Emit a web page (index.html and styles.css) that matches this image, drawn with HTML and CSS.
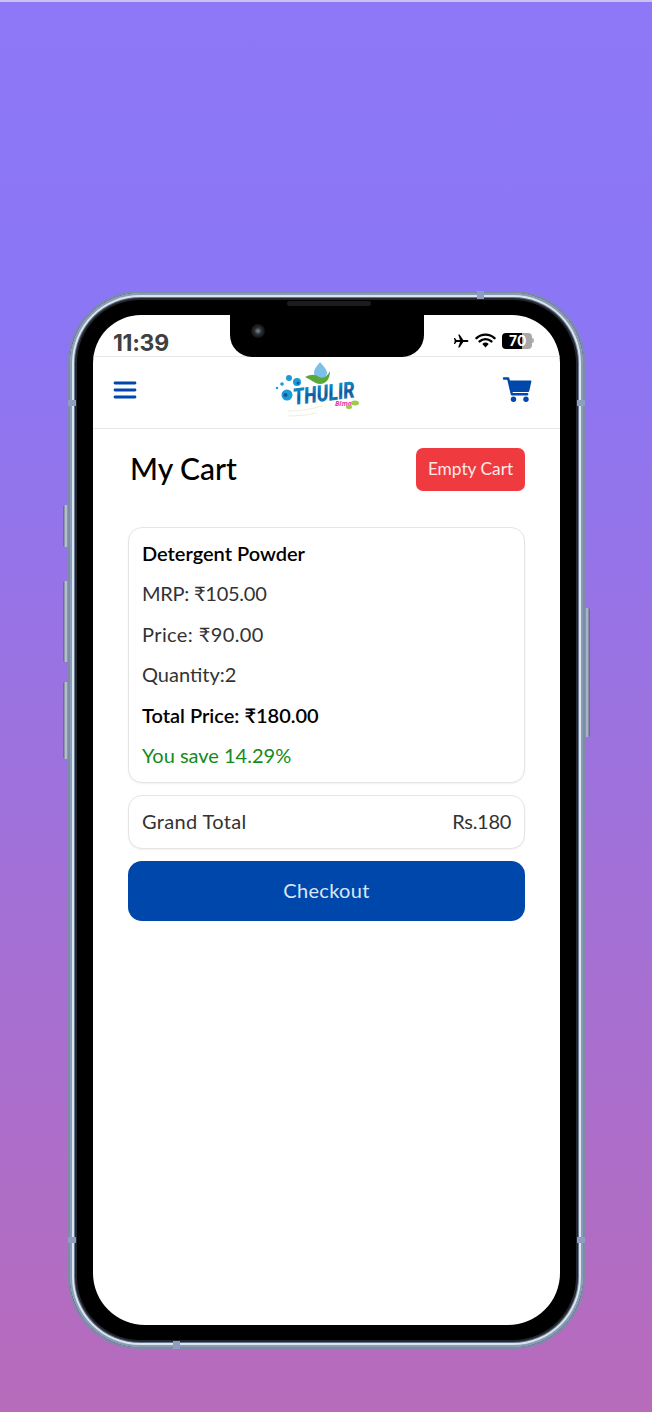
FILE: index.html
```html
<!DOCTYPE html>
<html lang="en">
<head>
    <meta charset="UTF-8">
    <meta name="viewport" content="width=device-width, initial-scale=1.0">
    <title>My Cart - Thulir</title>
    <link rel="stylesheet" href="styles.css">
</head>
<body>
    <div class="phone">
        <span class="side-btn btn-mute"></span>
        <span class="side-btn btn-up"></span>
        <span class="side-btn btn-down"></span>
        <span class="side-btn btn-power"></span>
        <span class="band band-top"></span>
        <span class="band band-right"></span>
        <span class="band band-left"></span>
        <span class="band band-left-low"></span>
        <span class="band band-right-low"></span>
        <span class="band band-bottom"></span>
        <span class="speaker"></span>

        <div class="screen">
            <div class="notch"><span class="camera"></span></div>

            <div class="statusbar">
                <div class="time">11:39</div>
                <div class="status-icons">
                    <svg class="plane" width="16" height="14" viewBox="0 0 16 14">
                        <path d="M15.5 7c0-.7-.8-1.100-1.600-1.100H10.300L6.600.4H5.200l1.800 5.500H3.500L2 4.100H.9l.8 2.900-.8 2.900H2l1.500-1.800H7L5.200 13.600h1.400l3.700-5.500h3.600c.8 0 1.600-.4 1.600-1.100z" fill="#000"/>
                    </svg>
                    <svg class="wifi" width="21" height="15" viewBox="0 0 21 15">
                        <path d="M1.500 5.200a13 13 0 0 1 18 0M4.600 8.400a8.700 8.700 0 0 1 11.800 0" fill="none" stroke="#000" stroke-width="2.400" stroke-linecap="round"/>
                        <path d="M7.300 11a4.700 4.700 0 0 1 6.400 0l-3.200 3.500z" fill="#000"/>
                    </svg>
                    <div class="battery"><span class="battery-level">70</span><span class="battery-cap"></span></div>
                </div>
            </div>

            <div class="topbar">
                <svg class="menu-icon" width="24" height="20" viewBox="0 0 24 20">
                    <path d="M2 3h20M2 10h20M2 17h20" stroke="#0047ab" stroke-width="2.800" stroke-linecap="round"/>
                </svg>
                <svg class="logo" width="90" height="66" viewBox="0 0 90 66">
                    <defs>
                        <linearGradient id="thulirBlue" x1="0" y1="0" x2="0" y2="1">
                            <stop offset="0" stop-color="#17a3dc"/>
                            <stop offset="0.55" stop-color="#0d5a9f"/>
                            <stop offset="1" stop-color="#2a9ad6"/>
                        </linearGradient>
                    </defs>
                    <path d="M46 3c3 4 7 7 7 11a6.500 6 0 0 1-13 0c0-4 3-7 6-11z" fill="#7cc0ea"/>
                    <path d="M31 18c6-3 10-3 14 0 4 2 8 0 11-6 0 8-4 13-10 13-5 0-10-5-15-7z" fill="#5aa83c"/>
                    <circle cx="13" cy="36" r="5.500" fill="#1b9ad6"/>
                    <circle cx="11.500" cy="36" r="2" fill="#0d5a9f"/>
                    <circle cx="15" cy="19" r="3" fill="#1b9ad6"/>
                    <circle cx="23" cy="23" r="4" fill="#1b9ad6"/>
                    <circle cx="24" cy="24" r="1.500" fill="#0d5a9f"/>
                    <circle cx="8" cy="25" r="1.800" fill="#1b9ad6"/>
                    <circle cx="3" cy="29" r="1.200" fill="#1b9ad6"/>
                    <text class="logo-text" x="20" y="46" textLength="62" lengthAdjust="spacingAndGlyphs" fill="url(#thulirBlue)" transform="rotate(-7 20 46)">THULIR</text>
                    <text class="logo-sub" x="61" y="47">Bima</text>
                    <ellipse cx="81" cy="44" rx="4" ry="2.500" fill="#9ccc4a"/>
                    <ellipse cx="75" cy="48" rx="3" ry="2" fill="#9ccc4a"/>
                    <path d="M14 52c12 0 24-2 34-5M14 57c8 0 20-1 28-3" fill="none" stroke="#f0efdc" stroke-width="1.200"/>
                </svg>
                <svg class="cart-icon" width="30" height="26" viewBox="0 0 30 26">
                    <path d="M2 1.500h4.200l3.700 15.800h15.300" fill="none" stroke="#0047ab" stroke-width="2.400" stroke-linecap="round" stroke-linejoin="round"/>
                    <path d="M6.800 3.500h21.700c.6 0 1 .5.900 1.100l-2.200 9.600c-.1.500-.5.800-1 .8H9.600z" fill="#0047ab"/>
                    <circle cx="11.500" cy="22.300" r="2.700" fill="#0047ab"/>
                    <circle cx="24" cy="22.300" r="2.700" fill="#0047ab"/>
                </svg>
            </div>

            <div class="content">
                <div class="cart-head">
                    <h1>My Cart</h1>
                    <button class="btn-empty">Empty Cart</button>
                </div>

                <div class="panel item">
                    <p class="name">Detergent Powder</p>
                    <p class="mrp">MRP: ₹105.00</p>
                    <p class="price">Price: ₹90.00</p>
                    <p>Quantity:2</p>
                    <p class="total">Total Price: ₹180.00</p>
                    <p class="save">You save 14.29%</p>
                </div>

                <div class="panel grand">
                    <span class="grand-label">Grand Total</span>
                    <span class="grand-value">Rs.180</span>
                </div>

                <button class="btn-checkout">Checkout</button>
            </div>
        </div>
    </div>
</body>
</html>
```

FILE: styles.css
```css
* {
    box-sizing: border-box;
}

html, body {
    margin: 0;
    height: 1412px;
    overflow: hidden;
}

body {
    font-family: 'Lato', sans-serif;
    background: linear-gradient(to bottom, #8e78f8, #8b76f5 22%, #b86bbb 100%);
    border-top: 2px solid #c9c3f2;
    padding: 289px 67px 0 68px;
}

/* device frame */
.phone {
    position: relative;
    width: 517px;
    height: 1058px;
    padding: 22px 23px;
    background: #000;
    border-radius: 72px;
    border: 2px solid #7b8ca8;
    box-shadow:
        inset 0 0 0 2px #8b9bb6,
        inset 0 0 0 4px #dbe5f0,
        inset 0 0 0 5px #66768e,
        inset 0 0 0 7px #24282e;
}

.side-btn {
    position: absolute;
    width: 5px;
    background: linear-gradient(to right, #56606e, #c6d0e0 60%, #76869f);
    border-radius: 2px 0 0 2px;
}

.btn-mute { left: -7px; top: 212px; height: 42px; }
.btn-up { left: -7px; top: 288px; height: 81px; }
.btn-down { left: -7px; top: 389px; height: 77px; }

.btn-power {
    right: -7px;
    top: 315px;
    height: 129px;
    border-radius: 0 2px 2px 0;
    background: linear-gradient(to left, #56606e, #b7c2d3 60%, #76869f);
}

.band {
    position: absolute;
    background: #8e9ec0;
}

.band-top { top: -2px; left: 407px; width: 7px; height: 8px; }
.band-right { right: -2px; top: 107px; width: 8px; height: 6px; }
.band-left { left: -2px; top: 107px; width: 8px; height: 6px; }
.band-left-low { left: -2px; top: 944px; width: 8px; height: 6px; }
.band-right-low { right: -2px; top: 944px; width: 8px; height: 6px; }
.band-bottom { left: 103px; bottom: -2px; width: 7px; height: 8px; }

.speaker {
    position: absolute;
    top: 8px;
    left: 217px;
    width: 84px;
    height: 5px;
    border-radius: 3px;
    background: #1c1c1e;
}

.screen {
    position: relative;
    height: 100%;
    background: #fff;
    border-radius: 48px 48px 52px 52px;
    overflow: hidden;
}

.notch {
    position: absolute;
    top: 0;
    left: 137px;
    width: 194px;
    height: 42px;
    background: #000;
    border-radius: 0 0 22px 22px;
}

.camera {
    position: absolute;
    left: 21px;
    top: 9px;
    width: 14px;
    height: 14px;
    border-radius: 50%;
    background: radial-gradient(circle, #7d8f98 0, #2a3036 35%, #111 70%);
}

/* status bar */
.statusbar {
    display: flex;
    justify-content: space-between;
    align-items: center;
    height: 42px;
    padding: 0 26px 0 20px;
    border-bottom: 1px solid #e6e7ea;
}

.time {
    font-family: 'Inter', sans-serif;
    font-size: 23px;
    font-weight: 700;
    color: #404040;
    padding-top: 14px;
    letter-spacing: -0.3px;
}

.status-icons {
    display: flex;
    align-items: center;
    gap: 6px;
    padding-top: 10px;
}

.battery {
    display: flex;
    align-items: center;
}

.battery-level {
    width: 30px;
    height: 16px;
    border-radius: 4px;
    background: linear-gradient(to right, #000 68%, #a8a8a8 68%);
    color: #fff;
    font-family: 'Inter', sans-serif;
    font-size: 14px;
    font-weight: 700;
    line-height: 16px;
    padding-left: 7px;
}

.battery-cap {
    width: 2px;
    height: 5px;
    background: #b0b0b0;
    border-radius: 0 2px 2px 0;
}

/* app bar */
.topbar {
    position: relative;
    display: flex;
    justify-content: space-between;
    align-items: center;
    height: 72px;
    padding: 0 28px 6px 20px;
    border-bottom: 1px solid #e6e7ea;
}

.logo {
    position: absolute;
    left: 181px;
    top: 2px;
}

.logo-text {
    font-family: 'Roboto', sans-serif;
    font-size: 23px;
    font-weight: 900;
    font-style: italic;
}

.logo-sub {
    font-family: 'Noto Sans', sans-serif;
    font-size: 7px;
    font-weight: 700;
    font-style: italic;
    fill: #e0409f;
}

/* cart */
.content {
    padding: 19px 35px 0;
}

.cart-head {
    display: flex;
    justify-content: space-between;
    align-items: center;
    height: 43px;
    padding-left: 2px;
    margin-bottom: 36px;
}

.cart-head h1 {
    margin: 0 0 4px;
    font-size: 30px;
    font-weight: 500;
    color: #000;
}

.btn-empty {
    width: 109px;
    height: 43px;
    padding: 0 0 2px;
    border: none;
    border-radius: 7px;
    background: #ef3a40;
    color: #fde8e8;
    font-family: inherit;
    font-size: 17.3px;
}

.panel {
    border: 1px solid #e5e5e5;
    border-radius: 14px;
    background: #fff;
    box-shadow: 0 1px 2px rgba(0, 0, 0, 0.06);
    font-size: 20px;
    color: #333;
}

.item {
    height: 256px;
    padding: 5px 13px 0;
}

.item p {
    margin: 0;
    height: 40.4px;
    line-height: 40px;
}

.item .name,
.item .total {
    font-weight: 600;
    color: #000;
}

.item .mrp {
    letter-spacing: -0.25px;
}

.item .price {
    letter-spacing: 0.4px;
}

.item .save {
    color: #138a1c;
}

.grand {
    display: flex;
    justify-content: space-between;
    align-items: center;
    height: 54px;
    margin-top: 12px;
    padding: 0 13px 2px;
}

.grand-label {
    letter-spacing: 0.35px;
}

.grand-value {
    letter-spacing: -0.3px;
}

.btn-checkout {
    display: block;
    width: 100%;
    height: 60px;
    margin-top: 12px;
    padding: 0 0 2px;
    border: none;
    border-radius: 14px;
    background: #0047ab;
    color: #d9e6f5;
    font-family: inherit;
    font-size: 20px;
    letter-spacing: 0.3px;
}
```
